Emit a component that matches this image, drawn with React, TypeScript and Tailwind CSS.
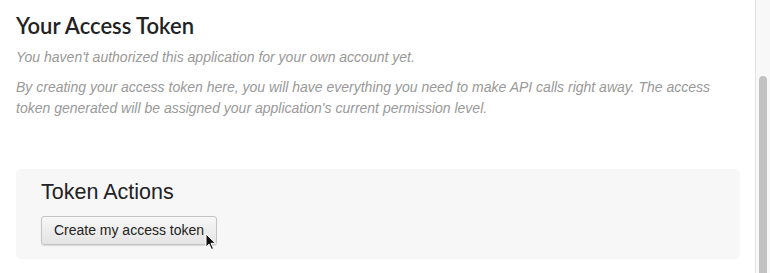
export default function App() {
  return (
    <div className="flex h-[273px] w-[770px] overflow-hidden bg-white">
      <div className="flex-1 pl-4 pr-[15px] pt-[11px]">
        <h2 className="text-[22px] font-semibold leading-[30px] text-[#222] [font-family:Lato,sans-serif]">
          Your Access Token
        </h2>
        <p className="mt-[6px] text-[14px] italic leading-[21px] text-[#999] [font-family:'Liberation_Sans',Arial,sans-serif]">
          You haven't authorized this application for your own account yet.
        </p>
        <p className="mt-[9px] max-w-[700px] text-[14px] italic leading-[21px] text-[#999] [font-family:'Liberation_Sans',Arial,sans-serif]">
          By creating your access token here, you will have everything you need to make API calls right away. The access
          token generated will be assigned your application's current permission level.
        </p>
        <div className="mt-[50px] h-[90px] rounded-[5px] bg-[#f7f7f7] pl-[25px] pt-[10px] [font-family:'Liberation_Sans',Arial,sans-serif]">
          <h3 className="text-[21.5px] leading-[26px] text-[#222]">Token Actions</h3>
          <div className="relative mt-[11px] w-fit">
            <button className="h-[29px] w-[176px] rounded-[3px] border border-[#c4c4c4] bg-gradient-to-b from-[#f7f7f7] to-[#e4e4e4] text-[14px] text-[#222] shadow-[0_1px_1px_rgba(0,0,0,0.12)]">
              Create my access token
            </button>
            <svg
              className="absolute left-[164px] top-[17px]"
              width="12"
              height="18"
              viewBox="0 0 12 18"
            >
              <path
                d="M1 1 L1 14 L4 11 L6.5 16.5 L8.5 15.6 L6 10.3 L10.5 10.3 Z"
                fill="#111"
                stroke="#fff"
                strokeWidth="1"
                strokeLinejoin="round"
              />
            </svg>
          </div>
        </div>
      </div>
      <div className="flex w-[15px] border-l border-[#e2e2e2] bg-[#f8f8f8] pl-[3px] pt-[76px]">
        <div className="h-[220px] w-[8px] rounded-full bg-[#c2c2c2]" />
      </div>
    </div>
  );
}
